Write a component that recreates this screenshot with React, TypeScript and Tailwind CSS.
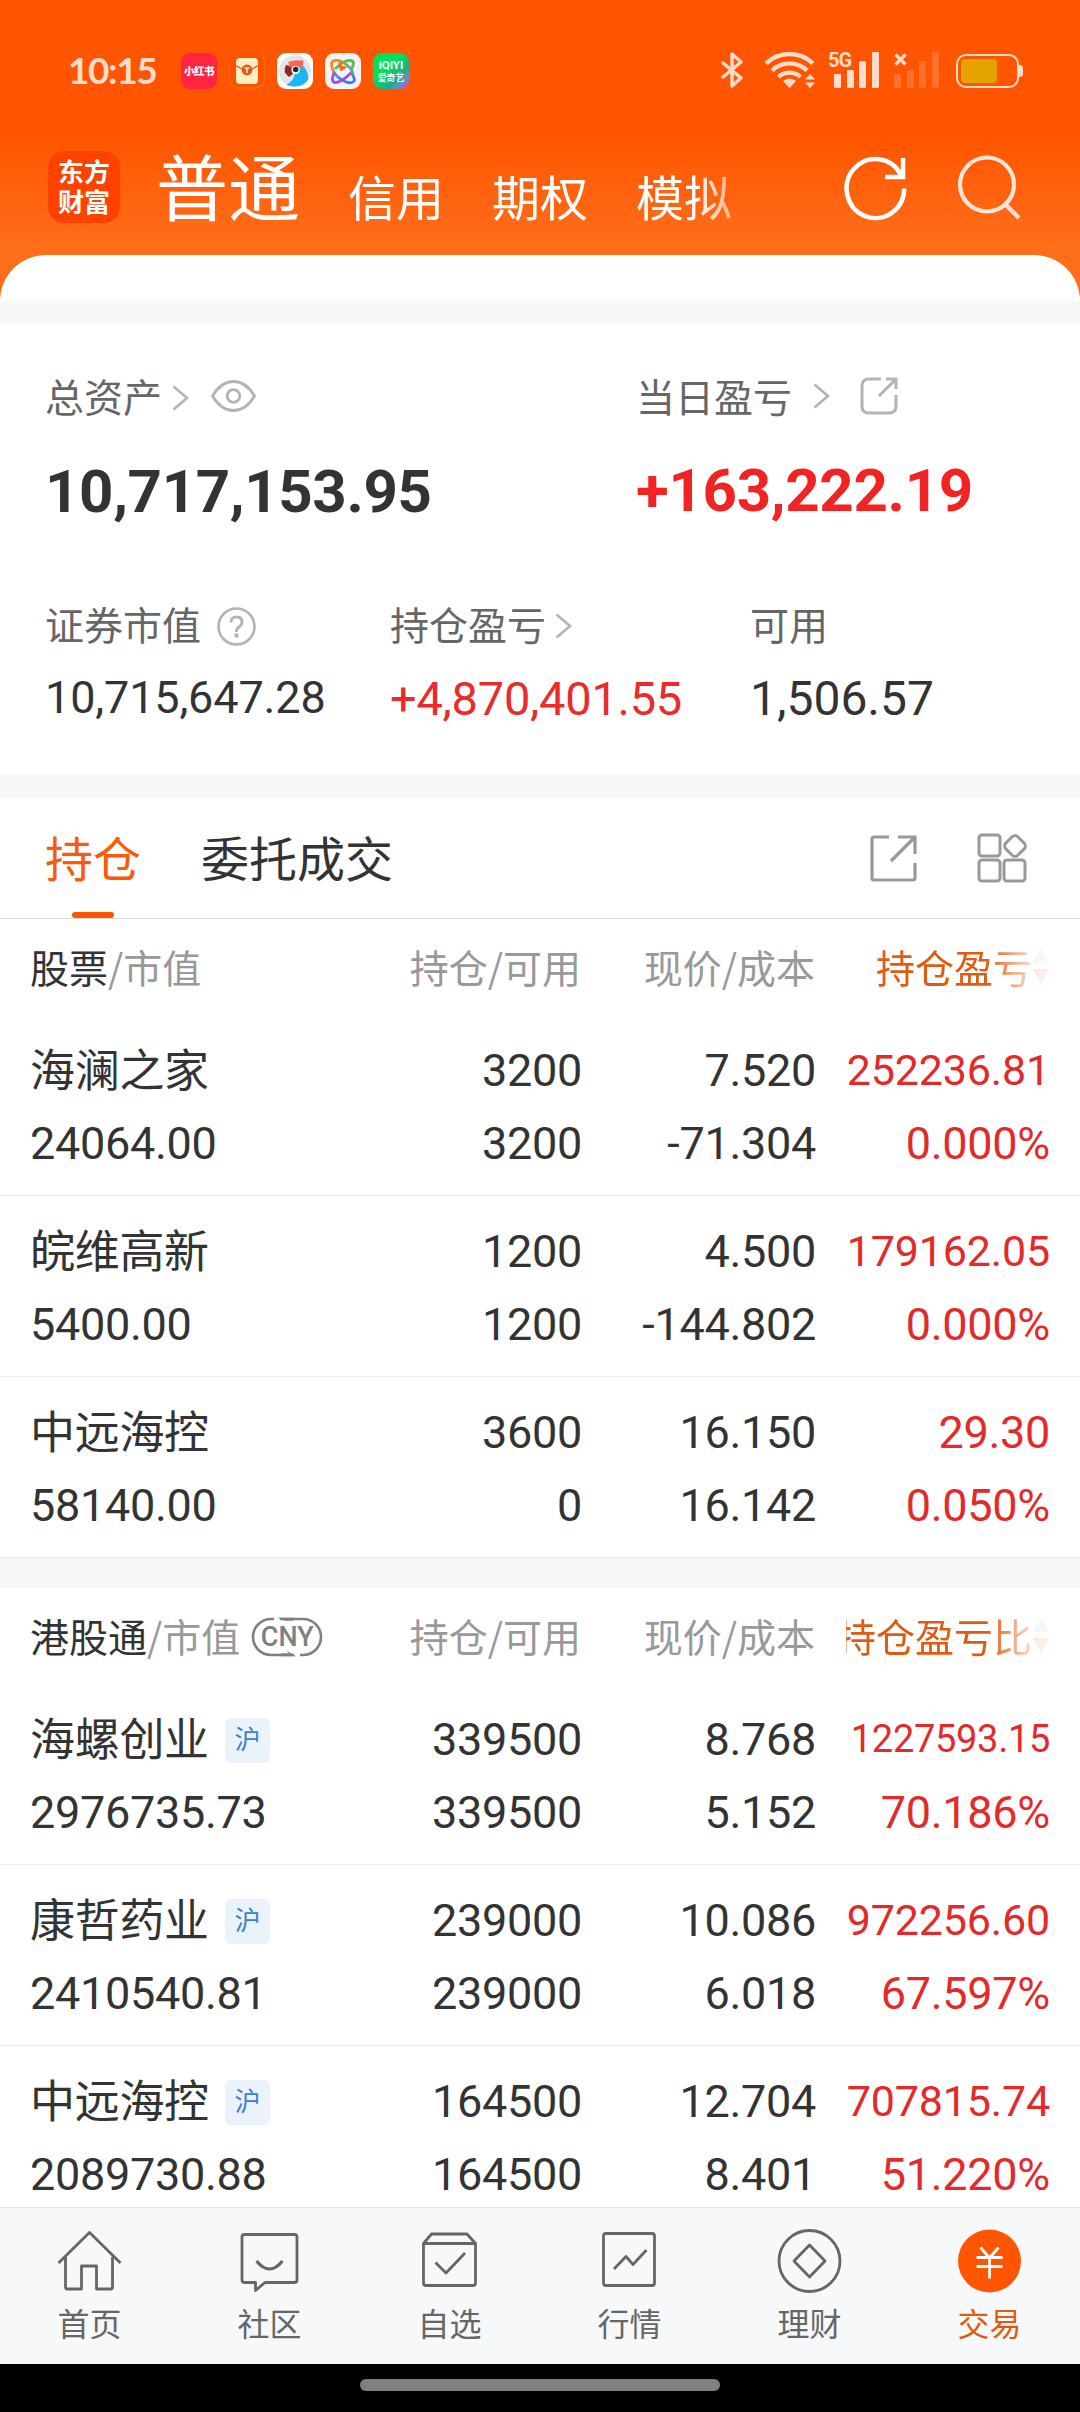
import type { ReactNode } from 'react';
import clsx from 'clsx';

interface Holding {
  name: string;
  value: string;
  tag?: string;
  amount: string;
  available: string;
  price: string;
  cost: string;
  profit: string;
  ratio: string;
}

const aShares: Holding[] = [
  { name: '海澜之家', value: '24064.00', amount: '3200', available: '3200', price: '7.520', cost: '-71.304', profit: '252236.81', ratio: '0.000%' },
  { name: '皖维高新', value: '5400.00', amount: '1200', available: '1200', price: '4.500', cost: '-144.802', profit: '179162.05', ratio: '0.000%' },
  { name: '中远海控', value: '58140.00', amount: '3600', available: '0', price: '16.150', cost: '16.142', profit: '29.30', ratio: '0.050%' },
];

const hkShares: Holding[] = [
  { name: '海螺创业', value: '2976735.73', tag: '沪', amount: '339500', available: '339500', price: '8.768', cost: '5.152', profit: '1227593.15', ratio: '70.186%' },
  { name: '康哲药业', value: '2410540.81', tag: '沪', amount: '239000', available: '239000', price: '10.086', cost: '6.018', profit: '972256.60', ratio: '67.597%' },
  { name: '中远海控', value: '2089730.88', tag: '沪', amount: '164500', available: '164500', price: '12.704', cost: '8.401', profit: '707815.74', ratio: '51.220%' },
];

function StatusBar() {
  return (
    <div className="flex h-[142px] items-center pl-[68px] pr-[57px]">
      <span className="w-[113px] pb-[4px] font-['Lato','Roboto',sans-serif] text-[37px] leading-none font-bold tracking-[-1.4px] text-[#ffdccb]">
        10:15
      </span>
      <div className="flex gap-3">
        <div className="flex size-9 items-center justify-center rounded-[9px] bg-[#ff2442] text-[10.5px] font-black tracking-[-0.5px] whitespace-nowrap text-white">
          小红书
        </div>
        <svg className="size-9" viewBox="0 0 36 36">
          <rect width="36" height="36" rx="9" fill="#ff6a00" />
          <rect x="1" width="34" height="34" rx="9" fill="#fb5200" />
          <rect x="7" y="5" width="22" height="26" rx="4" fill="#ffeec0" />
          <path d="M7 13c3 0 6 5 11 5s8-5 11-5" fill="none" stroke="#e0641a" strokeWidth="1.4" />
          <circle cx="18" cy="17" r="5.4" fill="#dd5a1c" />
          <path d="M15.500 15h5M18 15v5" stroke="#ffe3b0" strokeWidth="1.6" />
        </svg>
        <svg className="size-9" viewBox="0 0 36 36">
          <rect width="36" height="36" rx="9" fill="#fff" />
          <circle cx="18" cy="18" r="16" fill="#e3e5e8" />
          <path d="M11 9Q16 6.500 26.500 7.500L25.500 15 14 16Z" fill="#ff6456" />
          <path d="M9 12Q15 12 16 21L12 24Q5 19 9 12Z" fill="#96281b" />
          <path d="M26.500 13Q32 20 31 27Q24 36.500 9 32Q18 27 17.500 20Z" fill="#1cb6f5" />
          <circle cx="18.500" cy="17" r="4" fill="#fff" />
          <circle cx="18.700" cy="16.500" r="2.700" fill="#12303f" />
        </svg>
        <svg className="size-9" viewBox="0 0 36 36" fill="none" strokeWidth="2.800" strokeLinecap="round">
          <rect width="36" height="36" rx="9" fill="#f3f3f5" />
          <path d="M9.500 20Q4 10 8.500 8Q14 5.500 22 12" stroke="#f08a24" />
          <path d="M26.500 20Q32 28 27 29.500Q21 31 13 24" stroke="#3b7cf0" />
          <path d="M26.500 16Q31 8 25 7.500Q20 7 11 15" stroke="#52c04b" />
          <path d="M9 20Q5 29.500 11 29.500Q17 29 27 19" stroke="#9355e6" />
          <path d="M22 12Q26 15 28 20" stroke="#5fae8e" />
          <path d="M13 24l-3-3" stroke="#4f8df0" />
          <path d="M14.500 10.500l1 3.500 3.500.5-3 2" stroke="#f2701d" />
        </svg>
        <div className="flex size-9 flex-col items-center justify-center rounded-[9px] bg-linear-to-br from-[#00e05a] from-40% via-[#1fa88a] via-70% to-[#9b4dff] font-bold whitespace-nowrap text-white">
          <span className="font-['Roboto',sans-serif] text-[11.500px] leading-[12px]">iQIYI</span>
          <span className="text-[8.800px] leading-[13px]">爱奇艺</span>
        </div>
      </div>

      <div className="ml-auto flex items-center text-[#ffdccb]">
        <svg className="mb-[2px] h-[38px] w-[22px]" viewBox="0 0 22 38" fill="none" stroke="currentColor" strokeWidth="3.400" strokeLinejoin="round" strokeLinecap="round">
          <path d="M2 12l18 15-9 8V3l9 8L2 26" />
        </svg>
        <svg className="mb-[2px] ml-[21px] h-[38px] w-[52px]" viewBox="0 0 52 38" fill="none" stroke="currentColor" strokeWidth="4.400">
          <path d="M2 12.500a34 34 0 0 1 47 0" />
          <path d="M8 19.500a25 25 0 0 1 35 0" />
          <path d="M14.500 26a16 16 0 0 1 22 0" />
          <path d="M19 30q6.500-5 13 0l-6.500 7Z" fill="currentColor" stroke="none" />
          <path d="M41 28.500l5-5.500 5 5.500ZM41 31.500l5 5.500 5-5.500Z" fill="currentColor" stroke="none" />
        </svg>
        <div className="relative mb-[2px] ml-[12px] flex h-9 w-[52px] items-end gap-[5.500px] pl-[6px]">
          <span className="absolute top-[-3px] left-0 font-['Roboto',sans-serif] text-[20px] leading-[22px] font-bold tracking-[-1px]">
            5G
          </span>
          <span className="h-[14px] w-[7px] rounded-[1px] bg-current" />
          <span className="h-[18px] w-[7px] rounded-[1px] bg-current" />
          <span className="h-[27px] w-[7px] rounded-[1px] bg-current" />
          <span className="h-9 w-[7px] rounded-[1px] bg-current" />
        </div>
        <div className="relative mb-[2px] ml-[14px] flex h-9 w-[46px] items-end gap-[5.500px]">
          <svg className="absolute top-[1px] left-0 size-[13px]" viewBox="0 0 13 13" stroke="currentColor" strokeWidth="3.400">
            <path d="M1.500 1.500l10 10M11.500 1.500l-10 10" />
          </svg>
          <span className="h-[14px] w-[7px] rounded-[1px] bg-[#ff702c]" />
          <span className="h-[18px] w-[7px] rounded-[1px] bg-[#ff702c]" />
          <span className="h-[27px] w-[7px] rounded-[1px] bg-[#ff702c]" />
          <span className="h-9 w-[7px] rounded-[1px] bg-[#ff702c]" />
        </div>
        <svg className="ml-[16px] h-[34px] w-[67px]" viewBox="0 0 67 34">
          <rect x="1" y="1" width="61" height="32" rx="9" fill="none" stroke="currentColor" strokeWidth="2" />
          <path d="M63 11q4 0 4 3v6q0 3-4 3Z" fill="currentColor" />
          <rect x="5" y="5" width="36" height="24" rx="4" fill="#e5a300" />
        </svg>
      </div>
    </div>
  );
}

function TopNav() {
  return (
    <div className="flex h-[113px] pl-[48px] pr-[58px]">
      <div className="mt-[9px] flex size-[72px] flex-col items-center justify-center rounded-[16px] bg-[#ff4200] pb-[3px] text-[26px] leading-[30px] font-bold text-white">
        <span>东方</span>
        <span>财富</span>
      </div>
      <div className="ml-[36px] flex items-start gap-[48px] text-white [mask-image:linear-gradient(90deg,#000_540px,transparent_610px)]">
        <span className="h-[110px] text-[72px] leading-[84px]">普通</span>
        <span className="pt-[18px] text-[48px] leading-[70px]">信用</span>
        <span className="pt-[18px] text-[48px] leading-[70px]">期权</span>
        <span className="pt-[18px] text-[48px] leading-[70px]">模拟</span>
      </div>
      <svg className="mt-[13px] ml-auto h-[66px] w-[64px]" viewBox="0 0 64 66" fill="none" stroke="#fff" strokeWidth="4.500">
        <path d="M60.200 33.500A28.800 29.500 0 1 1 57 20" />
        <path d="M59 3v19H41" />
      </svg>
      <svg className="mt-[12px] ml-[49px] h-[66px] w-[65px]" viewBox="0 0 65 66" fill="none" stroke="#ffe6d9" strokeWidth="4.200">
        <ellipse cx="30" cy="30.500" rx="27" ry="27" />
        <path d="M48 50l14 14" />
      </svg>
    </div>
  );
}

function Chevron({ className }: { className?: string }) {
  return (
    <svg className={clsx('h-[26px] w-[17px]', className)} viewBox="0 0 17 26" fill="none" stroke="#b3b3b3" strokeWidth="2.600">
      <path d="M1.500 1.500L15 13 1.500 24.500" />
    </svg>
  );
}

function Amount({ className, children }: { className?: string; children: ReactNode }) {
  return <div className={clsx("font-['Roboto',sans-serif] leading-[58px]", className)}>{children}</div>;
}

function Summary() {
  return (
    <section className="h-[449px] shrink-0 bg-white pl-[45px] text-[39px] text-[#666]">
      <div className="flex pt-[42px]">
        <div className="w-[591px]">
          <div className="flex h-[58px] items-center">
            <span className="pb-[2px]">总资产</span>
            <Chevron className="mt-[3px] ml-[10px]" />
            <svg className="ml-[22px] h-[32px] w-[45px]" viewBox="0 0 45 32" fill="none" stroke="#b3b3b3" strokeWidth="2.800">
              <path d="M1.500 16Q10 1.500 22.500 1.500T43.500 16Q35 30.500 22.500 30.500T1.500 16Z" />
              <circle cx="22.500" cy="16" r="6.300" />
            </svg>
          </div>
          <div className="mt-[32px] h-[70px] font-['Roboto',sans-serif] text-[60px] leading-[70px] font-bold tracking-[-0.35px] text-[#333]">
            10,717,153.95
          </div>
        </div>
        <div>
          <div className="flex h-[58px] items-center">
            <span className="pb-[2px]">当日盈亏</span>
            <Chevron className="ml-[21px]" />
            <svg className="ml-[30px] h-[38px] w-[38px]" viewBox="0 0 38 38" fill="none" stroke="#b3b3b3" strokeWidth="3">
              <path d="M21 2H9Q2 2 2 9v20q0 7 7 7h20q7 0 7-7V18" />
              <path d="M26 2h10v10M36 2L19 19" />
            </svg>
          </div>
          <div className="mt-[31px] h-[70px] font-['Roboto',sans-serif] text-[60px] leading-[70px] font-bold tracking-[-0.3px] text-[#f12323]">
            +163,222.19
          </div>
        </div>
      </div>

      <div className="flex pt-[70px]">
        <div className="w-[345px]">
          <div className="flex h-[58px] items-center">
            <span className="pb-[6px]">证券市值</span>
            <svg className="ml-[16px] size-[39px]" viewBox="0 0 39 39" fill="none" stroke="#b3b3b3" strokeWidth="2.600">
              <circle cx="19.500" cy="19.500" r="18" />
              <path d="M14 15.500q0-5.500 5.500-5.500t5.500 5q0 3-3 5t-2.500 5" strokeWidth="2.800" />
              <path d="M17.500 28.500h4" strokeWidth="4" />
            </svg>
          </div>
          <Amount className="mt-[14px] text-[45px] tracking-[-0.15px] text-[#333]">10,715,647.28</Amount>
        </div>
        <div className="w-[360px]">
          <div className="flex h-[58px] items-center">
            <span className="pb-[6px]">持仓盈亏</span>
            <Chevron className="ml-[9px]" />
          </div>
          <Amount className="mt-[15px] text-[47px] tracking-[-0.25px] text-[#eb2a2a]">+4,870,401.55</Amount>
        </div>
        <div>
          <div className="flex h-[58px] items-center">
            <span className="pb-[6px]">可用</span>
          </div>
          <Amount className="mt-[15px] text-[48px] text-[#333]">1,506.57</Amount>
        </div>
      </div>
    </section>
  );
}

function Tabs() {
  return (
    <div className="flex h-[121px] shrink-0 items-center border-b border-[#ddd] bg-white pr-[53px] pl-[45px] text-[48px]">
      <div className="relative flex h-full items-center pb-[4px] text-[#fa5a0a]">
        持仓
        <span className="absolute bottom-0 left-[27px] h-[6px] w-[42px] rounded-full bg-[#ff5500]" />
      </div>
      <div className="ml-[60px] pb-[4px] text-[#333]">委托成交</div>
      <svg className="ml-auto size-[47px]" viewBox="0 0 47 47" fill="none" stroke="#999" strokeWidth="3.200">
        <path d="M19 2H4Q2 2 2 4v39q0 2 2 2h39q2 0 2-2V28" />
        <path d="M28 2h17v17M44 3L21 26" />
      </svg>
      <svg className="ml-[60px] size-[50px]" viewBox="0 0 50 50" fill="none" stroke="#999" strokeWidth="3">
        <rect x="2" y="2" width="21" height="21" rx="3" />
        <rect x="2" y="27" width="21" height="21" rx="3" />
        <rect x="27" y="27" width="21" height="21" rx="3" />
        <rect x="29.500" y="4.500" width="17" height="17" rx="4" transform="rotate(45 38 13)" />
      </svg>
    </div>
  );
}

// The sort label may be wider than its cell, so it is right aligned and clipped.
function TableHeader({ title, sortLabel, badge }: { title: string; sortLabel: string; badge?: ReactNode }) {
  return (
    <div className="grid h-[96px] shrink-0 grid-cols-[300px_251px_234px_235px] items-center pb-[2px] pl-[30px] text-[39px] text-[#999]">
      <div className="flex items-center whitespace-nowrap">
        <span className="text-[#333]">{title}</span>/市值
        {badge}
      </div>
      <div className="text-right">持仓/可用</div>
      <div className="text-right">现价/成本</div>
      <div className="ml-[31px] flex w-[204px] items-center justify-end overflow-hidden [mask-image:linear-gradient(90deg,#000_140px,rgba(0,0,0,0.1)_192px)]">
        <span className="shrink-0 whitespace-nowrap text-[#e05a10]">{sortLabel}</span>
        <svg className="h-[36px] w-[18px] shrink-0" viewBox="0 0 18 36">
          <path d="M9 0l8 15H1Z" fill="#b3b3b3" />
          <path d="M9 36l8-15H1Z" fill="#ff5500" />
        </svg>
      </div>
    </div>
  );
}

function HoldingRow({ item, divider }: { item: Holding; divider: boolean }) {
  return (
    <div
      className={clsx(
        "grid h-[181px] shrink-0 grid-cols-[300px_252px_234px_234px] border-b pt-[19px] pl-[30px] font-['Roboto','Noto_Sans_CJK_SC',sans-serif] text-[45px] leading-[73px] tracking-[-0.3px] text-[#333]",
        divider ? 'border-[#ebebeb]' : 'border-transparent',
      )}
    >
      <div>
        <div className="flex h-[73px] items-center pt-[2px]">
          {item.name}
          {item.tag && (
            <span className="ml-[16px] size-[45px] rounded-[6px] bg-[#eaf2fc] text-center text-[26px] leading-[45px] text-[#3b80d0]">
              {item.tag}
            </span>
          )}
        </div>
        <div>{item.value}</div>
      </div>
      <div className="text-right">
        <div>{item.amount}</div>
        <div>{item.available}</div>
      </div>
      <div className="text-right">
        <div>{item.price}</div>
        <div>{item.cost}</div>
      </div>
      <div className="text-right text-[#e32a2a]">
        <div
          className={clsx(
            'h-[73px]',
            item.profit.length > 9
              ? 'text-[38px]'
              : item.profit.length > 8
                ? 'text-[43px] tracking-[-0.15px]'
                : 'text-[45px]',
          )}
        >
          {item.profit}
        </div>
        <div>{item.ratio}</div>
      </div>
    </div>
  );
}

function CurrencyBadge() {
  return (
    <div className="relative mt-[4px] ml-[11px] flex h-[40px] w-[72px] items-center justify-center font-['Roboto',sans-serif] text-[27px] font-medium text-[#808080]">
      <svg className="absolute inset-0 h-full w-full" viewBox="0 0 72 40" fill="none" stroke="#808080" strokeWidth="2.600">
        <path d="M23 2h-3a18 18 0 0 0 0 36h23" />
        <path d="M49 38h3a18 18 0 0 0 0-36H29" />
        <path d="M26 .7h16v3H34ZM45 39.300H30v-3h8l-3-3Z" fill="#808080" stroke="none" />
      </svg>
      CNY
    </div>
  );
}

const navItems: { label: string; icon: ReactNode }[] = [
  {
    label: '首页',
    icon: (
      <>
        <path d="M1.500 34L32.500 3.500 63.500 34" />
        <path d="M8.500 28v30q0 2 2 2h14V37h15v23h14q2 0 2-2V28" />
      </>
    ),
  },
  {
    label: '社区',
    icon: (
      <>
        <path d="M7.500 5.500h50q2.500 0 2.500 2.500v43q0 2.500-2.500 2.500H28l-9.500 8v-8h-11Q5 53.500 5 51V8q0-2.500 2.500-2.500Z" />
        <path d="M19.500 32q13 16 26 0" strokeWidth="3.200" />
      </>
    ),
  },
  {
    label: '自选',
    icon: (
      <>
        <path d="M6.500 14.500l8-9.500H50l8.500 9.500V54q0 2.500-2.500 2.500H9q-2.500 0-2.500-2.500ZM6.500 14.500h52" />
        <path d="M18.500 33.500l10.500 10.500 19-20" />
      </>
    ),
  },
  {
    label: '行情',
    icon: (
      <>
        <rect x="6.500" y="4.500" width="51" height="52" rx="2.500" />
        <path d="M17 40l12-12.500 7 8L49.500 21" />
      </>
    ),
  },
  {
    label: '理财',
    icon: (
      <>
        <circle cx="32.500" cy="32" r="30.500" />
        <path d="M32.500 16L48 32 32.500 48 17 32Z" />
      </>
    ),
  },
  {
    label: '交易',
    icon: (
      <>
        <circle cx="32.500" cy="32" r="31.500" fill="#ff5500" stroke="none" />
        <path d="M23.500 18.500l9 10.500 9-10.500M19.500 28.500h26M19.500 37.500h26M32.500 29v20.500" stroke="#fff" />
      </>
    ),
  },
];

function BottomNav() {
  return (
    <nav className="grid h-[157px] shrink-0 grid-cols-6 border-t border-[#e2e2e4] bg-[#f7f8fa]">
      {navItems.map((item) => (
        <div
          key={item.label}
          className={clsx(
            'flex flex-col items-center pt-[21px] pr-[1px] text-[32px]',
            item.label === '交易' ? 'text-[#e05a10]' : 'text-[#666]',
          )}
        >
          <svg className="h-[65px] w-[65px]" viewBox="0 0 65 65" fill="none" stroke="#666" strokeWidth="2.800" strokeLinejoin="round">
            {item.icon}
          </svg>
          <span className="mt-[5px] leading-[46px]">{item.label}</span>
        </div>
      ))}
    </nav>
  );
}

export default function App() {
  return (
    <div className="flex h-[2412px] w-[1080px] flex-col overflow-hidden bg-white font-['Noto_Sans_CJK_SC',sans-serif]">
      <header className="h-[301px] shrink-0 bg-linear-to-b from-[#ff5500] from-45% to-[#ff6f1a] to-85%">
        <StatusBar />
        <TopNav />
        <div className="h-[46px] rounded-t-[47px] bg-white" />
      </header>
      <main className="flex min-h-0 flex-1 flex-col overflow-hidden">
        <div className="h-[24px] shrink-0 bg-[#f7f8fa]" />
        <Summary />
        <div className="h-[24px] shrink-0 bg-[#f7f8fa]" />
        <Tabs />
        <TableHeader title="股票" sortLabel="持仓盈亏" />
        {aShares.map((item) => (
          <HoldingRow key={item.name} item={item} divider />
        ))}
        <div className="h-[30px] shrink-0 bg-[#f6f7f9]" />
        <TableHeader title="港股通" sortLabel="持仓盈亏比" badge={<CurrencyBadge />} />
        {hkShares.map((item, index) => (
          <HoldingRow key={item.name} item={item} divider={index < hkShares.length - 1} />
        ))}
      </main>
      <BottomNav />
      <div className="flex h-[48px] shrink-0 justify-center bg-black pt-[15px]">
        <div className="h-[12px] w-[360px] rounded-full bg-[#808080]" />
      </div>
    </div>
  );
}
